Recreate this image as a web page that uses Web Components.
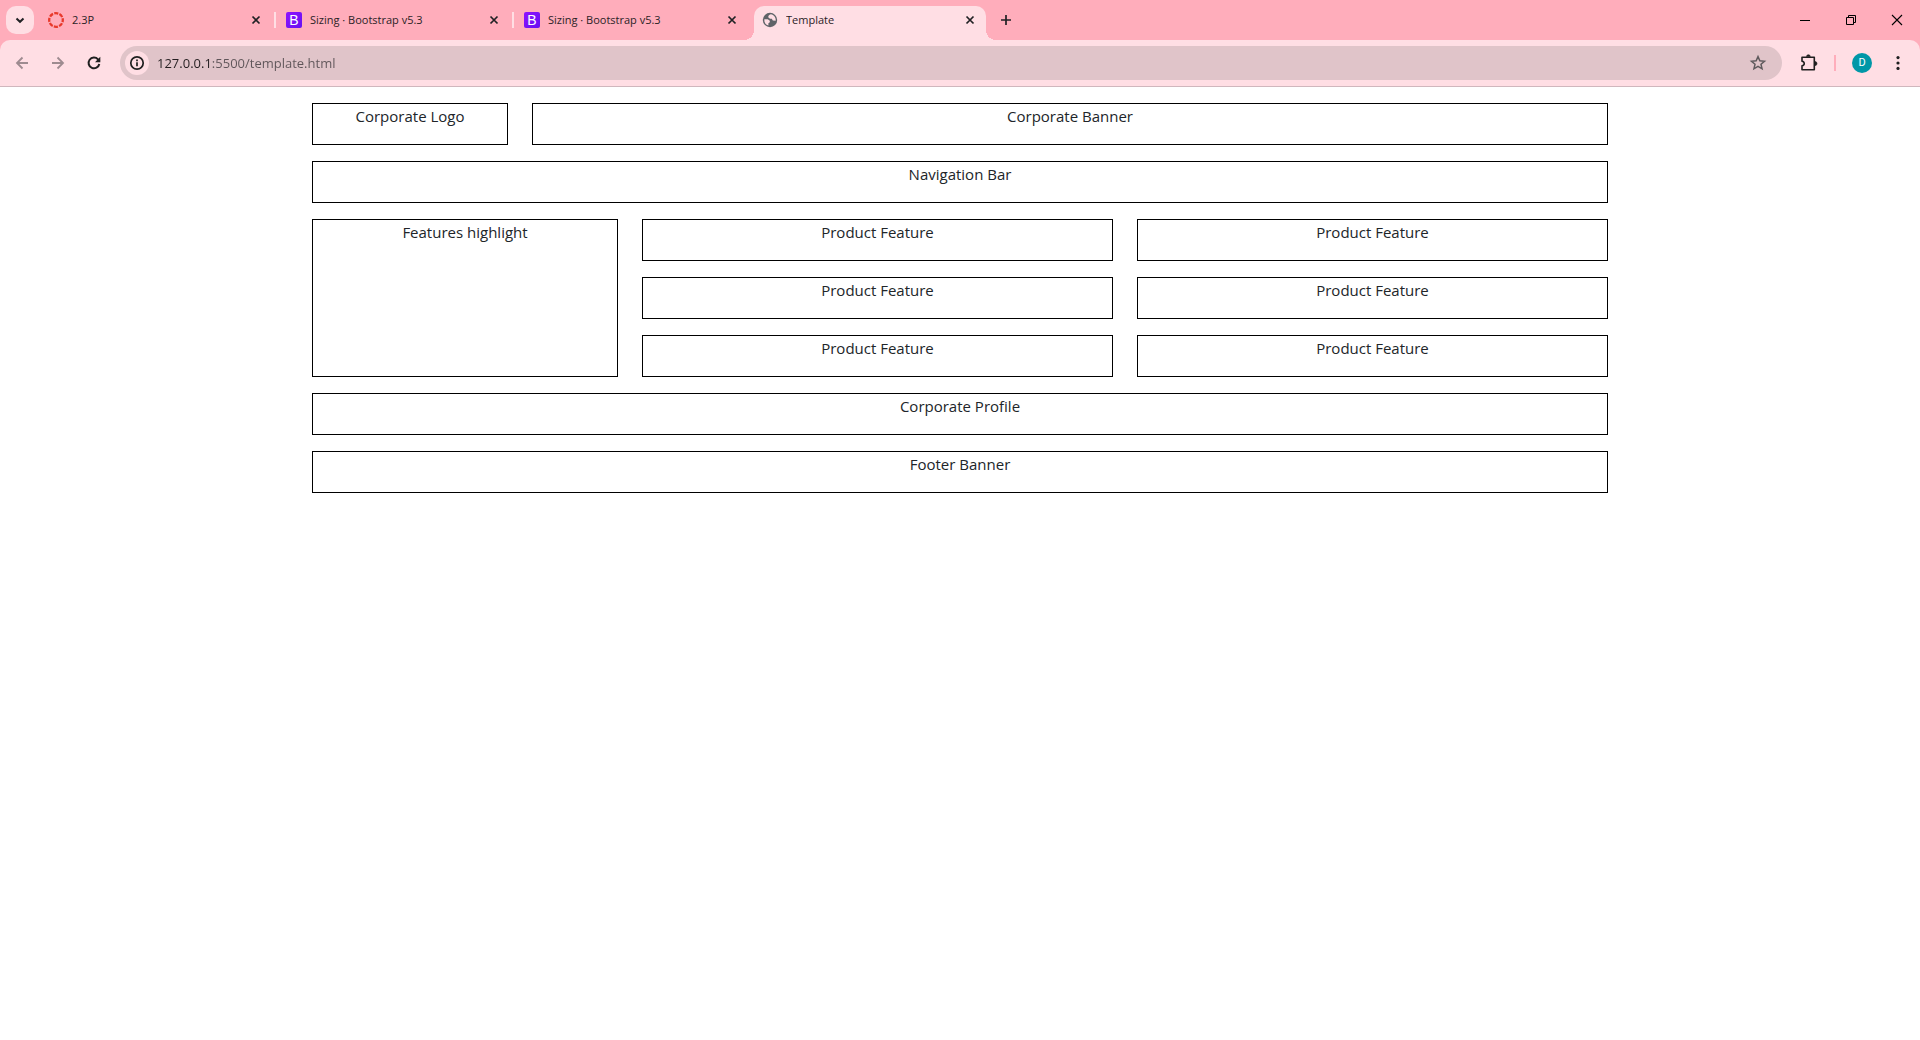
<!DOCTYPE html>
<html lang="en">
<head>
<meta charset="utf-8">
<title>Template</title>
<style>
  html, body { margin: 0; background: #fff; }
  body { font-family: "Open Sans", "Noto Sans", sans-serif; font-size: 15px; line-height: 24px; color: #212529; }
</style>
</head>
<body>
<browser-window>
  <tab-strip slot="tabs">
    <browser-tab icon="ring" divided>2.3P</browser-tab>
    <browser-tab icon="bootstrap" divided>Sizing · Bootstrap v5.3</browser-tab>
    <browser-tab icon="bootstrap">Sizing · Bootstrap v5.3</browser-tab>
    <browser-tab icon="globe" active>Template</browser-tab>
  </tab-strip>
  <tool-bar slot="toolbar"></tool-bar>
  <corporate-page></corporate-page>
</browser-window>

<script>
const ICONS = {
  ring: '<circle cx="8" cy="8" r="6.8" fill="none" stroke="#e8392b" stroke-width="2.3" stroke-dasharray="4.1 1.24" stroke-dashoffset="2"/>',
  globe: '<circle cx="8" cy="8" r="7.200" fill="#5f6368"/><path d="M8.800 2.300C7 2.900 6 4 6.400 5.400L8 6.700h1.800l1 1.700 2.900.3C14.100 5.700 12 2.800 8.800 2.300zM2.300 7.200h3.500l2 1.500v1.500l-1.400 1v2.300C3.800 12.900 2 10.500 2.300 7.200z" fill="#ffdee4"/>',
  close: '<path d="m4.500 4.500 7 7m0-7-7 7" fill="none" stroke="#202124" stroke-width="1.700"/>',
  chevron: '<path d="m4.500 6.500 3.500 3.300 3.500-3.300" fill="none" stroke="#202124" stroke-width="2"/>',
  plus: '<path d="M8 3v10M3 8h10" fill="none" stroke="#202124" stroke-width="1.700"/>',
  back: '<path d="M14 8H3m5.500-5.500L3 8l5.500 5.500" fill="none" stroke="#9e8b90" stroke-width="1.800"/>',
  forward: '<path d="M2 8h11M7.500 2.500 13 8l-5.500 5.500" fill="none" stroke="#9e8b90" stroke-width="1.800"/>',
  reload: '<path d="M13.300 9A5.400 5.400 0 1 1 12 4.300l1.500 1.600" fill="none" stroke="#1f1f1f" stroke-width="2"/><path d="M14.300 1.800v5.400H9z" fill="#1f1f1f"/>',
  info: '<circle cx="8" cy="8" r="6.200" fill="none" stroke="#1f1f1f" stroke-width="1.700"/><path d="M8 7.200v4.100M8 4.600v1.700" stroke="#1f1f1f" stroke-width="1.700"/>',
  star: '<path d="m8 1.600 1.850 4.250 4.650.4-3.500 3.050 1.050 4.500L8 11.400l-4.050 2.400L5 9.300 1.500 6.250l4.650-.4z" fill="none" stroke="#5f5a5d" stroke-width="1.500"/>',
  puzzle: '<path d="M1 2.200h12.300v12.600H1v-3.900c3-.4 3-4.200 0-4.600z" fill="none" stroke="#1f1f1f" stroke-width="1.600" stroke-linejoin="round"/><path d="M5.500 1.600a1.900 1.900 0 0 1 3.800 0zM14 6.600a2 2 0 0 1 0 4z" fill="#1f1f1f" stroke="#1f1f1f" stroke-width=".6"/>',
  dots: '<g fill="#1f1f1f"><circle cx="8" cy="2.600" r="1.600"/><circle cx="8" cy="8" r="1.600"/><circle cx="8" cy="13.400" r="1.600"/></g>',
  minimize: '<path d="M3 8.500h10" stroke="#000"/>',
  restore: '<path d="M3.500 5.500h7v7h-7zM5.500 5.500v-2h7v7h-2" fill="none" stroke="#000"/>',
  exit: '<path d="m3 3 10 10M13 3 3 13" stroke="#000" stroke-width="1.100"/>'
};

class UiIcon extends HTMLElement {
  connectedCallback() {
    const name = this.getAttribute('name') || this.getAttribute('icon');
    const root = this.attachShadow({ mode: 'open' });
    if (name === 'bootstrap') {
      root.innerHTML = `<style>
        :host { display: block; width: 16px; height: 16px; flex: none; }
        span { display: block; border-radius: 2px; background: linear-gradient(135deg, #9013fe, #6610f2);
               color: #fff; font: 14px/16px "Liberation Sans", sans-serif; text-align: center; }
      </style><span>B</span>`;
      return;
    }
    root.innerHTML = `<style>
      :host { display: block; width: 16px; height: 16px; flex: none; }
      svg { display: block; width: 100%; height: 100%; overflow: visible; }
    </style><svg viewBox="0 0 16 16" aria-hidden="true">${ICONS[name]}</svg>`;
  }
}
customElements.define('ui-icon', UiIcon);

class IconButton extends HTMLElement {
  connectedCallback() {
    this.attachShadow({ mode: 'open' }).innerHTML = `<style>
      :host { display: block; flex: none; width: var(--w, 28px); height: var(--h, 28px); }
      button { display: flex; align-items: center; justify-content: center; width: 100%; height: 100%;
               margin: 0; padding: 0; border: 0; border-radius: var(--r, 0); background: var(--bg, transparent); }
    </style><button type="button" aria-label="${this.getAttribute('label')}"><ui-icon name="${this.getAttribute('icon')}"></ui-icon></button>`;
  }
}
customElements.define('icon-button', IconButton);

class BrowserTab extends HTMLElement {
  connectedCallback() {
    this.attachShadow({ mode: 'open' }).innerHTML = `<style>
      :host { display: flex; align-items: center; gap: 8px; flex: 0 1 232px; height: 34px; box-sizing: border-box;
              padding: 0 8px 6px; position: relative; min-width: 0;
              font: 11px/22px var(--ui-font); color: #2b2226; }
      .title { flex: 1; min-width: 0; overflow: hidden; white-space: nowrap; }
      icon-button { --w: 16px; --h: 16px; }
      :host([active]) { background: #ffdee4; border-radius: 10px 10px 0 0; }
      :host([active])::before, :host([active])::after { content: ""; position: absolute; bottom: 0; width: 10px; height: 10px; }
      :host([active])::before { right: 100%; background: radial-gradient(circle at 0 0, transparent 10px, #ffdee4 10px); }
      :host([active])::after { left: 100%; background: radial-gradient(circle at 100% 0, transparent 10px, #ffdee4 10px); }
      :host([divided])::after { content: ""; position: absolute; left: calc(100% + 2px); top: 6px; width: 2px; height: 16px; background: #ffdee4; }
    </style>
    <ui-icon name="${this.getAttribute('icon')}"></ui-icon>
    <span class="title"><slot></slot></span>
    <icon-button icon="close" label="Close tab"></icon-button>`;
  }
}
customElements.define('browser-tab', BrowserTab);

class TabStrip extends HTMLElement {
  connectedCallback() {
    this.attachShadow({ mode: 'open' }).innerHTML = `<style>
      :host { display: flex; align-items: flex-start; height: 40px; padding-left: 6px; background: #ffadbb; box-sizing: border-box; }
      .menu { --r: 10px; --bg: #ffdee4; margin: 6px 6px 0 0; }
      .tabs { display: flex; gap: 6px; padding-top: 6px; flex: 0 1 946px; min-width: 0; }
      .new { margin: 6px auto 0 6px; }
      .window { --w: 46px; --h: 40px; }
    </style>
    <icon-button class="menu" icon="chevron" label="Search tabs"></icon-button>
    <div class="tabs"><slot></slot></div>
    <icon-button class="new" icon="plus" label="New tab"></icon-button>
    <icon-button class="window" icon="minimize" label="Minimize"></icon-button>
    <icon-button class="window" icon="restore" label="Restore"></icon-button>
    <icon-button class="window" icon="exit" label="Close"></icon-button>`;
  }
}
customElements.define('tab-strip', TabStrip);

class AddressBar extends HTMLElement {
  connectedCallback() {
    this.attachShadow({ mode: 'open' }).innerHTML = `<style>
      :host { display: flex; align-items: center; flex: 1; min-width: 0; height: 34px; box-sizing: border-box;
              padding: 0 10px 0 5px; border-radius: 17px; background: #e0c4c9; }
      .info { --w: 24px; --h: 24px; --r: 12px; --bg: #ffdee4; margin-right: 8px; }
      /* The host part of the address is darker than the port and path. */
      input { --host-width: 55px; flex: 1; min-width: 0; height: 24px; margin: 0; padding: 0; border: 0; outline: 0;
              font: 13px/24px var(--ui-font); color: #5f5559;
              background: linear-gradient(90deg, #241e20 var(--host-width), #5f5559 var(--host-width));
              -webkit-background-clip: text; background-clip: text; -webkit-text-fill-color: transparent; }
    </style>
    <icon-button class="info" icon="info" label="View site information"></icon-button>
    <input type="text" aria-label="Address" value="127.0.0.1:5500/template.html" spellcheck="false">
    <icon-button icon="star" label="Bookmark this tab"></icon-button>`;
  }
}
customElements.define('address-bar', AddressBar);

class ToolBar extends HTMLElement {
  connectedCallback() {
    this.attachShadow({ mode: 'open' }).innerHTML = `<style>
      :host { display: block; background: #ffadbb; }
      .bar { display: flex; align-items: center; height: 47px; box-sizing: border-box; padding: 0 8px;
             border-bottom: 1px solid #d0b7bd; border-radius: 10px 10px 0 0; background: #ffdee4; }
      nav { display: flex; gap: 8px; margin-right: 12px; }
      .extensions { margin: 0 11px 0 13px; }
      .divider { width: 2px; height: 16px; background: #ffadbb; }
      .avatar { width: 20px; height: 20px; margin: 0 12px 0 16px; padding: 0; border: 0; border-radius: 50%;
                background: #0097a7; color: #fff; font: 11px/20px Roboto, sans-serif; text-align: center; }
    </style>
    <div class="bar">
      <nav>
        <icon-button icon="back" label="Back"></icon-button>
        <icon-button icon="forward" label="Forward"></icon-button>
        <icon-button icon="reload" label="Reload"></icon-button>
      </nav>
      <address-bar></address-bar>
      <icon-button class="extensions" icon="puzzle" label="Extensions"></icon-button>
      <span class="divider"></span>
      <button class="avatar" type="button" aria-label="Profile D">D</button>
      <icon-button icon="dots" label="Menu"></icon-button>
    </div>`;
  }
}
customElements.define('tool-bar', ToolBar);

class BrowserWindow extends HTMLElement {
  connectedCallback() {
    this.attachShadow({ mode: 'open' }).innerHTML = `<style>
      :host { display: block; --ui-font: "Open Sans", "Noto Sans", sans-serif; }
    </style>
    <slot name="tabs"></slot><slot name="toolbar"></slot><slot></slot>`;
  }
}
customElements.define('browser-window', BrowserWindow);

class LayoutBox extends HTMLElement {
  connectedCallback() {
    this.attachShadow({ mode: 'open' }).innerHTML = `<style>
      :host { display: block; box-sizing: border-box; border: 1px solid #000; text-align: center; }
      p { margin: 0 0 16px; }
    </style><p><slot></slot></p>`;
  }
}
customElements.define('layout-box', LayoutBox);

class CorporatePage extends HTMLElement {
  connectedCallback() {
    const features = '<layout-box>Product Feature</layout-box>'.repeat(6);
    this.attachShadow({ mode: 'open' }).innerHTML = `<style>
      :host { display: block; max-width: 1320px; box-sizing: border-box; margin: 0 auto; padding: 16px 12px; }
      main { display: grid; grid-template-columns: repeat(12, 1fr); gap: 16px 24px; }
      .logo { grid-column: span 2; }
      .banner { grid-column: span 10; }
      .full { grid-column: 1 / -1; }
      .highlight { grid-column: span 3; }
      .features { grid-column: span 9; display: grid; grid-template-columns: 1fr 1fr; gap: 16px 24px; }
    </style>
    <main>
      <layout-box class="logo">Corporate Logo</layout-box>
      <layout-box class="banner">Corporate Banner</layout-box>
      <layout-box class="full">Navigation Bar</layout-box>
      <layout-box class="highlight">Features highlight</layout-box>
      <div class="features">${features}</div>
      <layout-box class="full">Corporate Profile</layout-box>
      <layout-box class="full">Footer Banner</layout-box>
    </main>`;
  }
}
customElements.define('corporate-page', CorporatePage);
</script>
</body>
</html>
